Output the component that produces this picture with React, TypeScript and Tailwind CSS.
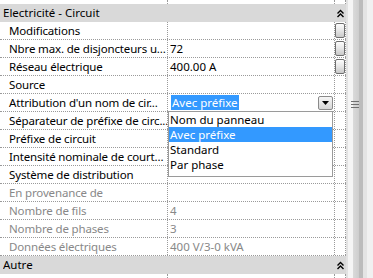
import React from 'react';

type Row = {
  name: string;
  value?: string;
  muted?: boolean;
  button?: boolean;
  combo?: boolean;
};

const rows: Row[] = [
  { name: 'Modifications', button: true },
  { name: 'Nbre max. de disjoncteurs u...', value: '72', button: true },
  { name: 'Réseau électrique', value: '400.00 A', button: true },
  { name: 'Source' },
  { name: "Attribution d'un nom de cir...", combo: true },
  { name: 'Séparateur de préfixe de circ...' },
  { name: 'Préfixe de circuit' },
  { name: 'Intensité nominale de court...' },
  { name: 'Système de distribution' },
  { name: 'En provenance de', muted: true },
  { name: 'Nombre de fils', value: '4', muted: true },
  { name: 'Nombre de phases', value: '3', muted: true },
  { name: 'Données électriques', value: '400 V/3-0 kVA', muted: true },
];

const options = ['Nom du panneau', 'Avec préfixe', 'Standard', 'Par phase'];

function Collapse() {
  return (
    <svg width="7" height="9" viewBox="0 0 7 9" className="block">
      <path d="M0.5 4.5 L3.5 1.5 L6.5 4.5 M0.5 8 L3.5 5 L6.5 8" fill="none" stroke="#000" strokeWidth="1.4" />
    </svg>
  );
}

function Header({ title }: { title: string }) {
  return (
    <div className="flex h-[18px] items-center bg-[#d9d9d9] pl-[3px]">
      <span className="flex-1 truncate">{title}</span>
      <span className="w-[11px] flex justify-center">
        <Collapse />
      </span>
    </div>
  );
}

function EditButton() {
  return (
    <div className="mx-auto h-[15px] w-[10px] rounded-[2px] border border-[#6e6e6e] bg-linear-to-b from-[#fdfdfd] via-[#e6e6e6] to-[#c9c9c9]" />
  );
}

function Combo() {
  return (
    <div className="flex h-full items-center pr-[1px]">
      <span className="ml-[1px] h-[15px] bg-[#3399ff] px-[1px] leading-[15px] text-white">Avec préfixe</span>
      <span className="flex-1" />
      <span className="flex h-[14px] w-[15px] items-center justify-center rounded-[2px] border border-[#8a8a8a] bg-linear-to-b from-[#f6f6f6] to-[#d6d6d6]">
        <svg width="7" height="4" viewBox="0 0 7 4">
          <path d="M0 0 H7 L3.5 4 Z" fill="#000" />
        </svg>
      </span>
    </div>
  );
}

function PropRow({ row }: { row: Row }) {
  const tone = row.muted ? 'text-[#888888]' : 'text-black';
  return (
    <div className="grid h-[18px] grid-cols-[168px_167px_11px] border-b border-dotted border-[#9a9a9a]">
      <div className={`overflow-hidden whitespace-nowrap border-r border-dotted border-[#9a9a9a] pl-[9px] leading-[17px] tracking-[-0.15px] ${tone}`}>
        {row.name}
      </div>
      <div className={`overflow-hidden whitespace-nowrap border-r border-dotted border-[#9a9a9a] pl-[2px] leading-[17px] ${tone}`}>
        {row.combo ? <Combo /> : row.value}
      </div>
      <div className="flex items-center border-r border-dotted border-[#9a9a9a]">
        {row.button && <EditButton />}
      </div>
    </div>
  );
}

function Spacer({ h }: { h: string }) {
  return (
    <div className={`grid ${h} grid-cols-[168px_167px_11px]`}>
      <div className="border-r border-dotted border-[#9a9a9a]" />
      <div className="border-r border-dotted border-[#9a9a9a]" />
      <div className="border-r border-dotted border-[#9a9a9a]" />
    </div>
  );
}

export default function App() {
  return (
    <div
      className="relative flex h-[278px] w-[373px] overflow-hidden bg-white text-[11.5px] text-black"
      style={{ fontFamily: '"Noto Sans", "Open Sans", sans-serif' }}
    >
      <div className="w-[346px] shrink-0">
        <Spacer h="h-[4px]" />
        <Header title="Electricité - Circuit" />
        {rows.map((r) => (
          <PropRow key={r.name} row={r} />
        ))}
        <Header title="Autre" />
        <Spacer h="h-[4px]" />
      </div>

      {/* scrollbar */}
      <div className="relative flex-1 bg-[linear-gradient(to_right,#e2e2e2_0px,#e2e2e2_2px,#f5f5f5_2px,#f5f5f5_7px,#dadada_7px,#cdcdcd_13px,#bcbcbc_13px,#bcbcbc_17px,#e4e4e4_17px,#e4e4e4_21px,#f1f1f1_21px)]">
        <div className="absolute left-[5px] top-[101px] flex w-[8px] flex-col gap-[2px]">
          <div className="h-px bg-[#6f6f6f]" />
          <div className="h-px bg-[#6f6f6f]" />
          <div className="h-px bg-[#6f6f6f]" />
        </div>
      </div>

      {/* open dropdown list */}
      <div className="absolute left-[168px] top-[111px] h-[66px] w-[165px] border border-[#9a9a9a] bg-white">
        {options.map((o) => (
          <div
            key={o}
            className={`h-[15px] whitespace-nowrap pl-[1px] leading-[15px] ${o === 'Avec préfixe' ? 'bg-[#3399ff] text-white' : 'text-black'}`}
          >
            {o}
          </div>
        ))}
      </div>
    </div>
  );
}
